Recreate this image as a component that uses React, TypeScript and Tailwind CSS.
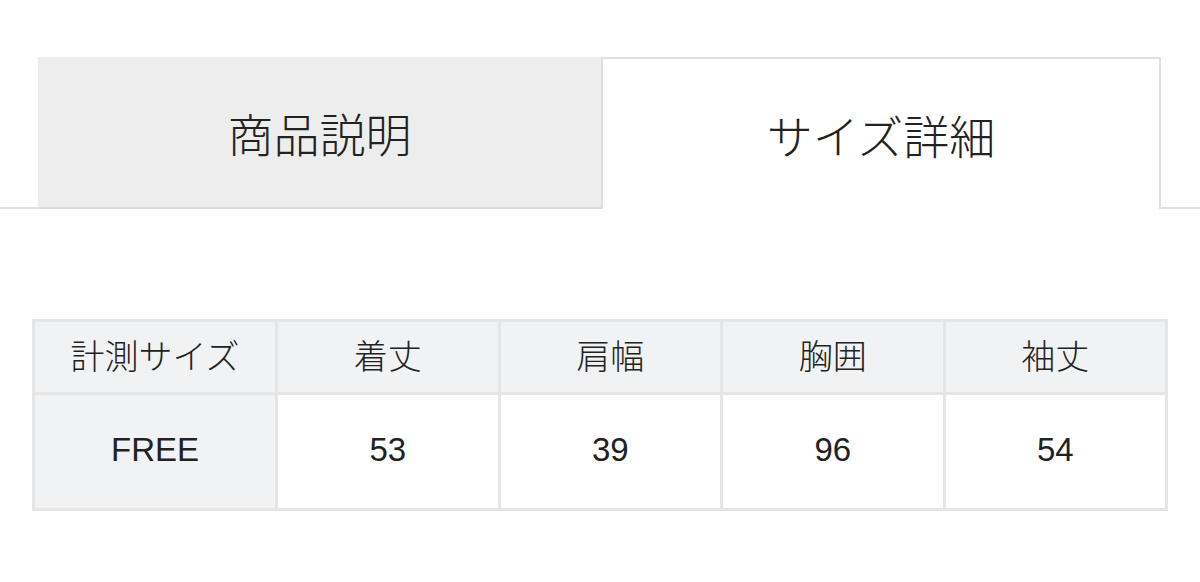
const headers = ['計測サイズ', '着丈', '肩幅', '胸囲', '袖丈']
const values = ['FREE', '53', '39', '96', '54']

export default function App() {
  return (
    <div
      className="w-[1200px] h-[582px] bg-white text-[#222]"
      style={{ fontFamily: '"Liberation Sans", "Noto Sans CJK JP", sans-serif' }}
    >
      <div className="pt-[57px] flex border-b-2 border-[#e2e2e2]">
        <div className="w-[38px]" />
        <div className="w-[563px] h-[152px] pt-[8px] bg-[#ededed] flex items-center justify-center text-[46px] font-light -mb-[2px] border-b-2 border-[#dcdcdc]">
          商品説明
        </div>
        <div className="w-[560px] h-[152px] pt-[8px] bg-white border-2 border-b-0 border-[#e0e0e0] flex items-center justify-center text-[46px] font-light -mb-[2px] relative z-10">
          サイズ詳細
        </div>
      </div>

      <div className="mt-[110px] ml-[32px]">
        <table className="border-collapse w-[1136px] text-[34px]">
          <tbody>
            <tr className="h-[73px]">
              {headers.map((h, i) => (
                <td
                  key={h}
                  className={`border-[3px] border-[#e5e5e5] bg-[#f1f2f4] text-center font-light ${i === 0 ? 'w-[243px]' : ''}`}
                >
                  {h}
                </td>
              ))}
            </tr>
            <tr className="h-[116px]">
              {values.map((v, i) => (
                <td
                  key={i}
                  className={`border-[3px] border-[#e5e5e5] text-center text-[33px] pb-[4px] ${i === 0 ? 'bg-[#f1f2f4]' : 'bg-white'}`}
                >
                  {v}
                </td>
              ))}
            </tr>
          </tbody>
        </table>
      </div>
    </div>
  )
}
